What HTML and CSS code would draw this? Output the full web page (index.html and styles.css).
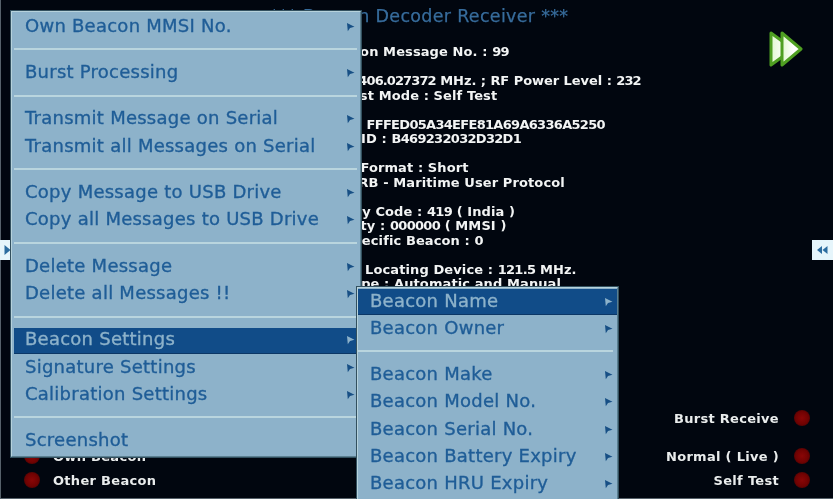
FILE: index.html
```html
<!DOCTYPE html>
<html lang="en">
<head>
<meta charset="utf-8">
<title>Beacon Decoder Receiver</title>
<link rel="stylesheet" href="styles.css">
</head>
<body>
<svg class="defs" width="0" height="0" aria-hidden="true">
  <symbol id="arrow" viewBox="0 0 9 10"><path d="M1 1 L8.500 4.800 L4 6 L1.800 9.300 Z"/></symbol>
  <linearGradient id="play" x1="0" x2="1" y1="0" y2="0"><stop offset="0" stop-color="#e2f8d0"/><stop offset="0.6" stop-color="#ffffff"/></linearGradient>
</svg>
<main class="screen">
  <h1 class="title">*** Beacon Decoder Receiver ***</h1>
  <section class="report">
    <div class="group">
      <p class="l1">Decoded Beacon Message No. : <span class="num">99</span></p>
    </div>
    <div class="group">
      <p class="l2">Frequency : <span class="num">406.027372</span> MHz. ; RF Power Level : <span class="num">232</span></p>
      <p class="l3">Burst Mode : Self Test</p>
    </div>
    <div class="group">
      <p class="l4">Hex Code : <span class="num">FFFED05A34EFE81A69A6336A5250</span></p>
      <p class="l5">Beacon ID : <span class="num">B469232032D32D1</span></p>
    </div>
    <div class="group">
      <p class="l6">Message Format : Short</p>
      <p class="l7">Type : EPIRB - Maritime User Protocol</p>
    </div>
    <div class="group">
      <p class="l8">Country Code : <span class="num">419</span> ( India )</p>
      <p class="l9">Identity : <span class="num">000000</span> ( MMSI )</p>
      <p class="l10">Specific Beacon : 0</p>
    </div>
    <div class="group">
      <p class="l11">Homing Locating Device : <span class="num">121.5</span> MHz.</p>
      <p class="l12">Activation Type : Automatic and Manual</p>
    </div>
  </section>
  <svg class="next" viewBox="0 0 34 36" aria-hidden="true">
    <path class="tri" d="M2 2 L24 18 L2 34 Z"/>
    <path class="tri" d="M13 2 L32 18 L13 34 Z"/>
  </svg>
  <button class="side side-left" aria-label="Expand left"><svg viewBox="0 0 10 20"><path d="M4 5 L10 10 L4 15 Z"/></svg></button>
  <button class="side side-right" aria-label="Previous"><svg viewBox="0 0 21 20"><path d="M5 10 L10 6 V14 Z M10.500 10 L15.500 6 V14 Z"/></svg></button>
  <ul class="legend legend-left">
    <li class="own"><i class="led"></i><span>Own Beacon</span></li>
    <li><i class="led"></i><span>Other Beacon</span></li>
  </ul>
  <ul class="legend legend-right">
    <li class="burst"><span>Burst Receive</span><i class="led"></i></li>
    <li class="normal"><span>Normal ( Live )</span><i class="led"></i></li>
    <li><span>Self Test</span><i class="led"></i></li>
  </ul>
  <nav class="menu main-menu">
    <a class="item">Own Beacon MMSI No.<svg><use href="#arrow"/></svg></a>
    <hr>
    <a class="item">Burst Processing<svg><use href="#arrow"/></svg></a>
    <hr>
    <a class="item">Transmit Message on Serial<svg><use href="#arrow"/></svg></a>
    <a class="item">Transmit all Messages on Serial<svg><use href="#arrow"/></svg></a>
    <hr>
    <a class="item">Copy Message to USB Drive<svg><use href="#arrow"/></svg></a>
    <a class="item">Copy all Messages to USB Drive<svg><use href="#arrow"/></svg></a>
    <hr>
    <a class="item">Delete Message<svg><use href="#arrow"/></svg></a>
    <a class="item">Delete all Messages !!<svg><use href="#arrow"/></svg></a>
    <hr>
    <a class="item active">Beacon Settings<svg><use href="#arrow"/></svg></a>
    <a class="item">Signature Settings<svg><use href="#arrow"/></svg></a>
    <a class="item">Calibration Settings<svg><use href="#arrow"/></svg></a>
    <hr>
    <a class="item">Screenshot</a>
  </nav>
  <nav class="menu sub-menu">
    <a class="item active">Beacon Name<svg><use href="#arrow"/></svg></a>
    <a class="item">Beacon Owner<svg><use href="#arrow"/></svg></a>
    <hr>
    <a class="item">Beacon Make<svg><use href="#arrow"/></svg></a>
    <a class="item">Beacon Model No.<svg><use href="#arrow"/></svg></a>
    <a class="item">Beacon Serial No.<svg><use href="#arrow"/></svg></a>
    <a class="item">Beacon Battery Expiry<svg><use href="#arrow"/></svg></a>
    <a class="item">Beacon HRU Expiry<svg><use href="#arrow"/></svg></a>
  </nav>
</main>
</body>
</html>
```
FILE: styles.css
```css
* { box-sizing: border-box; }
html, body { margin: 0; padding: 0; height: 100%; background: #01060f; overflow: hidden; }
.defs { position: absolute; }
.screen {
  position: relative;
  width: 833px;
  height: 499px;
  overflow: hidden;
  background: #01060f;
  box-shadow: inset 1px -1px 0 #56616a;
  font-family: "DejaVu Sans", sans-serif;
  filter: blur(0.35px);
}
.title {
  margin: 0;
  padding: 6px 0 0 270px;
  font-size: 17.500px;
  line-height: 20px;
  font-weight: 400;
  letter-spacing: 0.300px;
  color: #376c9c;
  -webkit-text-stroke: 0.250px #376c9c;
}
.report { padding: 19px 0 0 240px; color: #f2f4f4; font-size: 13px; font-weight: 700; letter-spacing: 0.100px; line-height: 14.500px; }
.report p { margin: 0; white-space: pre; }
.num { letter-spacing: -0.700px; }
.l1 { padding-left: 15.500px; }
.l2 { padding-left: 28.600px; letter-spacing: -0.050px; }
.l2 .num { letter-spacing: -0.900px; }
.l3 { padding-left: 94px; }
.l4 { padding-left: 42px; }
.l5 { padding-left: 62.500px; }
.l6 { padding-left: 51px; }
.l7 { padding-left: 46px; }
.l8 { padding-left: 72px; }
.l9 { padding-left: 77px; }
.l10 { padding-left: 103px; }
.l11 { padding-left: 63.500px; }
.l12 { padding-left: 25px; }
.group { margin-bottom: 14.500px; }
.next { position: absolute; left: 769px; top: 31px; width: 34px; height: 36px; filter: blur(0.5px); }
.tri { fill: url(#play); stroke: #4f9f22; stroke-width: 3px; stroke-linejoin: round; }
.side { position: absolute; top: 240px; height: 20px; padding: 0; border: 0; background: #e6f5fb; }
.side svg { display: block; width: 100%; height: 100%; fill: #2c6c9f; }
.side-left { left: 0; width: 11px; }
.side-right { right: 0; width: 21px; }
.legend { position: absolute; margin: 0; padding: 0; list-style: none; color: #e9ecec; font-size: 13px; font-weight: 700; letter-spacing: 0.300px; }
.legend li { display: flex; align-items: center; height: 16px; }
.legend-left { left: 24px; top: 448px; }
.legend-left .own { margin-bottom: 8px; }
.legend-left .led { margin-right: 13px; }
.legend-right { right: 23px; top: 410px; }
.legend-right li { justify-content: flex-end; }
.legend-right .led { margin-left: 15px; }
.legend-right .burst { margin-bottom: 22px; }
.legend-right .normal { margin-bottom: 8px; }
.led { flex: none; width: 16px; height: 16px; border-radius: 50%; background: radial-gradient(circle, #8a0606 0, #700202 55%, #2a0404 100%); }
.menu {
  position: absolute;
  background: #8db2ca;
  border: 1px solid #b6d2dc;
  border-right-color: #5b7f90;
  border-bottom-color: #5b7f90;
  outline: 1px solid #32505f;
  font-size: 18px;
  letter-spacing: 0.250px;
  color: #1f5d97;
  -webkit-text-stroke: 0.350px #1f5d97;
}
.main-menu { left: 11px; top: 11px; width: 350px; height: 446px; padding: 2px 3px 0 2px; }
.sub-menu { left: 357px; top: 287px; width: 261px; height: 240px; padding: 1px 0 0; }
.item { display: flex; align-items: center; justify-content: space-between; height: 26.200px; margin-bottom: 1px; padding: 0 2px 4px 11px; white-space: nowrap; }
.sub-menu .item { padding: 0 4px 4px 12px; }
.item svg { flex: none; width: 9px; height: 10px; margin-top: 3px; fill: #174f85; stroke: none; }
.active { background: #114c88; box-shadow: inset 0 -1px 0 #0b3766; color: #8db2ca; -webkit-text-stroke-color: #8db2ca; }
.active svg { fill: #8db2ca; }
.menu hr { height: 2px; margin: 8px 0 10.250px; border: 0; background: #b9d5de; }
.sub-menu hr { margin-right: 4px; }
```
